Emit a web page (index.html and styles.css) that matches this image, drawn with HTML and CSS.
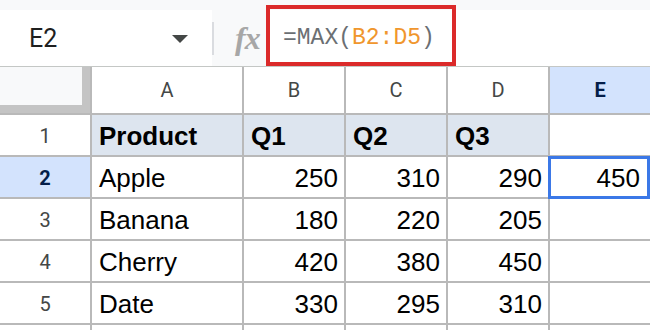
FILE: index.html
```html
<!DOCTYPE html>
<html>
<head>
<meta charset="utf-8">
<link rel="stylesheet" href="styles.css">
</head>
<body>
<div class="toolbar">
  <div class="namebox">
    <span class="cellref">E2</span>
    <span class="caret"></span>
  </div>
  <div class="sep"></div>
  <div class="fx">fx</div>
  <div class="formula"><span class="fn">=MAX(</span><span class="rng">B2:D5</span><span class="fn">)</span></div>
  <div class="highlight"></div>
</div>
<div class="sheet">
  <div class="corner"><div class="corner-in"></div></div>
  <div class="ch">A</div>
  <div class="ch">B</div>
  <div class="ch">C</div>
  <div class="ch">D</div>
  <div class="ch ch-sel">E</div>

  <div class="rh">1</div>
  <div class="c hd">Product</div>
  <div class="c hd">Q1</div>
  <div class="c hd">Q2</div>
  <div class="c hd">Q3</div>
  <div class="c"></div>

  <div class="rh rh-sel">2</div>
  <div class="c">Apple</div>
  <div class="c n">250</div>
  <div class="c n">310</div>
  <div class="c n">290</div>
  <div class="c n ne">450</div>

  <div class="rh">3</div>
  <div class="c">Banana</div>
  <div class="c n">180</div>
  <div class="c n">220</div>
  <div class="c n">205</div>
  <div class="c"></div>

  <div class="rh">4</div>
  <div class="c">Cherry</div>
  <div class="c n">420</div>
  <div class="c n">380</div>
  <div class="c n">450</div>
  <div class="c"></div>

  <div class="rh">5</div>
  <div class="c">Date</div>
  <div class="c n">330</div>
  <div class="c n">295</div>
  <div class="c n">310</div>
  <div class="c"></div>

  <div class="rh"></div>
  <div class="c"></div>
  <div class="c"></div>
  <div class="c"></div>
  <div class="c"></div>
  <div class="c"></div>

  <div class="selection"></div>
</div>
</body>
</html>
```
FILE: styles.css
```css
html, body {
  margin: 0;
  padding: 0;
}
body {
  width: 650px;
  height: 332px;
  overflow: hidden;
  background: #fff;
  font-family: "Liberation Sans", Arial, sans-serif;
}
.toolbar {
  position: relative;
  display: flex;
  height: 56px;
  padding-top: 10px;
  background: #f8f9fa;
  border-bottom: 1px solid #c4c7c5;
}
.namebox {
  width: 212px;
  background: #fff;
  display: flex;
  align-items: center;
  box-sizing: border-box;
  padding-left: 29px;
  padding-right: 24px;
}
.cellref {
  font-family: Roboto, "Liberation Sans", sans-serif;
  font-size: 25px;
  color: #1f1f1f;
  flex: 1;
}
.caret {
  width: 0;
  height: 0;
  border-left: 8px solid transparent;
  border-right: 8px solid transparent;
  border-top: 8px solid #444746;
  margin-top: 2px;
}
.sep {
  width: 2px;
  margin: 12px 0 11px;
  background: #dadce0;
}
.fx {
  width: 52px;
  box-sizing: border-box;
  padding-left: 21px;
  display: flex;
  align-items: center;
  font-family: "Liberation Serif", serif;
  font-style: italic;
  font-weight: bold;
  font-size: 32px;
  color: #a7a7a7;
  letter-spacing: -1px;
}
.formula {
  flex: 1;
  background: #fff;
  display: flex;
  align-items: center;
  padding-left: 17px;
  font-family: "Liberation Mono", monospace;
  font-size: 23px;
}
.fn { color: #6b6f73; }
.rng { color: #f0962d; }
.highlight {
  position: absolute;
  left: 266px;
  top: 5px;
  width: 190px;
  height: 61px;
  box-sizing: border-box;
  border: 4.5px solid #db2a2a;
}
.sheet {
  position: relative;
  display: grid;
  grid-template-columns: 90px 150px 100px 100px 100px 100px;
  grid-template-rows: 46px repeat(5, 40px) 5px;
  gap: 2px;
  background: #b9b9b9;
}
.corner {
  background: #c4c4c4;
}
.corner-in {
  width: 82px;
  height: 38px;
  background: #f8f9fa;
}
.ch {
  background: #fff;
  display: flex;
  align-items: center;
  justify-content: center;
  font-family: Roboto, "Liberation Sans", sans-serif;
  font-size: 20px;
  color: #444746;
}
.ch-sel {
  background: #d3e3fd;
  color: #041e49;
  font-weight: bold;
}
.rh {
  background: #fff;
  display: flex;
  align-items: center;
  justify-content: center;
  font-family: Roboto, "Liberation Sans", sans-serif;
  font-size: 20px;
  color: #444746;
  padding-top: 2px;
}
.rh-sel {
  background: #d3e3fd;
  color: #041e49;
  font-weight: bold;
}
.c {
  background: #fff;
  font-size: 26px;
  color: #000;
  line-height: 40px;
  padding: 1px 7px 0;
  white-space: nowrap;
  overflow: hidden;
}
.hd {
  background: #dde5ef;
  font-weight: bold;
}
.n {
  text-align: right;
  padding-right: 6px;
}
.ne {
  padding-right: 10px;
}
.selection {
  position: absolute;
  left: 548px;
  top: 89px;
  width: 102px;
  height: 43px;
  box-sizing: border-box;
  border: 3px solid #3b78e7;
}
```
